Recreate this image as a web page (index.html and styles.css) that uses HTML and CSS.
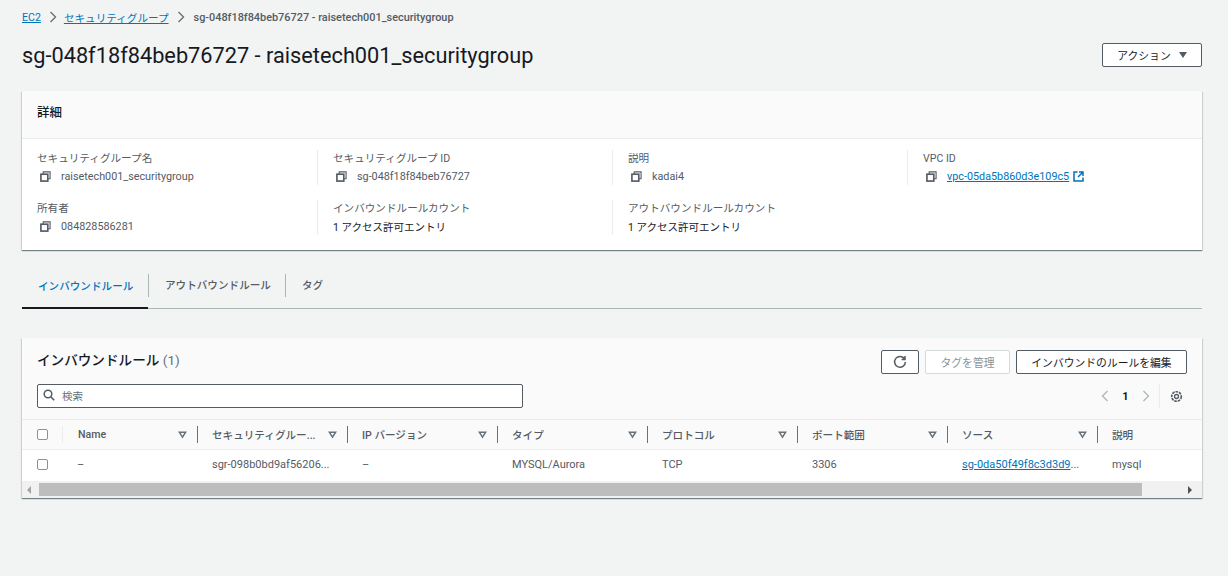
FILE: index.html
```html
<!DOCTYPE html>
<html lang="ja">
<head>
  <meta charset="UTF-8">
  <meta name="viewport" content="width=device-width, initial-scale=1.0">
  <title>Security group</title>
  <link rel="stylesheet" href="styles.css">
</head>
<body>
  <svg class="defs" width="0" height="0">
    <symbol id="copy" viewBox="0 0 12 12">
      <path d="M3.5 3.5V1h7.5v7.5H8.5" fill="none" stroke="#545b64" stroke-width="1.2"/>
      <rect x="1" y="3.5" width="7.5" height="7.5" fill="none" stroke="#545b64" stroke-width="1.8"/>
    </symbol>
    <symbol id="caret" viewBox="0 0 10 10">
      <path d="M1.5 2.5h7L5 8z" fill="none" stroke="#687078" stroke-width="1.6"/>
    </symbol>
  </svg>

  <nav class="crumbs">
    <a href="#">EC2</a>
    <svg class="crumb-sep" width="8" height="12" viewBox="0 0 8 12"><path d="M1.5 1l5 5-5 5" fill="none" stroke="#687078" stroke-width="1.4"/></svg>
    <a href="#">セキュリティグループ</a>
    <svg class="crumb-sep" width="8" height="12" viewBox="0 0 8 12"><path d="M1.5 1l5 5-5 5" fill="none" stroke="#687078" stroke-width="1.4"/></svg>
    <span class="crumb-here">sg-048f18f84beb76727 - raisetech001_securitygroup</span>
  </nav>

  <header class="page-head">
    <h1>sg-048f18f84beb76727 - raisetech001_securitygroup</h1>
    <button class="btn action-btn">アクション <span class="tri"></span></button>
  </header>

  <section class="card">
    <div class="card-head"><h2>詳細</h2></div>
    <div class="details">
      <div class="detail">
        <div class="label">セキュリティグループ名</div>
        <div class="value"><svg class="copy"><use href="#copy"/></svg>raisetech001_securitygroup</div>
      </div>
      <div class="detail">
        <div class="label">セキュリティグループ ID</div>
        <div class="value"><svg class="copy"><use href="#copy"/></svg>sg-048f18f84beb76727</div>
      </div>
      <div class="detail">
        <div class="label">説明</div>
        <div class="value"><svg class="copy"><use href="#copy"/></svg>kadai4</div>
      </div>
      <div class="detail">
        <div class="label">VPC ID</div>
        <div class="value"><svg class="copy"><use href="#copy"/></svg><a href="#">vpc-05da5b860d3e109c5</a>
          <svg class="ext" width="11" height="11" viewBox="0 0 11 11"><path d="M4.5 1H1v9h9V6.5M6 1h4v4M10 1L5 6" fill="none" stroke="#0073bb" stroke-width="1.5"/></svg>
        </div>
      </div>
      <div class="detail">
        <div class="label">所有者</div>
        <div class="value"><svg class="copy"><use href="#copy"/></svg>084828586281</div>
      </div>
      <div class="detail">
        <div class="label">インバウンドルールカウント</div>
        <div class="value dark">1 アクセス許可エントリ</div>
      </div>
      <div class="detail">
        <div class="label">アウトバウンドルールカウント</div>
        <div class="value dark">1 アクセス許可エントリ</div>
      </div>
    </div>
  </section>

  <div class="tabs">
    <div class="tab active">インバウンドルール</div>
    <div class="tab">アウトバウンドルール</div>
    <div class="tab">タグ</div>
  </div>

  <section class="card rules">
    <div class="rules-head">
      <h2>インバウンドルール <span class="count">(1)</span></h2>
      <div class="rules-actions">
        <button class="btn icon-btn">
          <svg width="14" height="14" viewBox="0 0 14 14"><path d="M11.6 4A5.4 5.4 0 1 0 12.4 7M12 1v3.4H8.6" fill="none" stroke="#545b64" stroke-width="1.5"/></svg>
        </button>
        <button class="btn disabled">タグを管理</button>
        <button class="btn edit-btn">インバウンドのルールを編集</button>
      </div>
    </div>
    <div class="tools">
      <div class="search">
        <svg width="12" height="12" viewBox="0 0 12 12"><circle cx="5" cy="5" r="3.8" fill="none" stroke="#545b64" stroke-width="1.5"/><path d="M8 8l3.2 3.2" stroke="#545b64" stroke-width="1.6"/></svg>
        <span>検索</span>
      </div>
      <div class="pager">
        <svg width="8" height="12" viewBox="0 0 8 12"><path d="M6.5 1l-5 5 5 5" fill="none" stroke="#aab7b8" stroke-width="1.3"/></svg>
        <span class="page-num">1</span>
        <svg width="8" height="12" viewBox="0 0 8 12"><path d="M1.5 1l5 5-5 5" fill="none" stroke="#aab7b8" stroke-width="1.3"/></svg>
        <span class="pager-sep"></span>
        <svg width="13" height="13" viewBox="0 0 13 13"><circle cx="6.5" cy="6.5" r="2" fill="none" stroke="#545b64" stroke-width="1.3"/><circle cx="6.5" cy="6.5" r="4.8" fill="none" stroke="#545b64" stroke-width="1.6" stroke-dasharray="2.6 .9"/></svg>
      </div>
    </div>

    <div class="grid head-row">
      <div class="check-cell"><span class="check"></span></div>
      <div class="th first">Name<svg class="caret"><use href="#caret"/></svg></div>
      <div class="th">セキュリティグルー...<svg class="caret"><use href="#caret"/></svg></div>
      <div class="th">IP バージョン<svg class="caret"><use href="#caret"/></svg></div>
      <div class="th">タイプ<svg class="caret"><use href="#caret"/></svg></div>
      <div class="th">プロトコル<svg class="caret"><use href="#caret"/></svg></div>
      <div class="th">ポート範囲<svg class="caret"><use href="#caret"/></svg></div>
      <div class="th">ソース<svg class="caret"><use href="#caret"/></svg></div>
      <div class="th last">説明</div>
    </div>
    <div class="grid body-row">
      <div class="check-cell"><span class="check"></span></div>
      <div class="td first">–</div>
      <div class="td">sgr-098b0bd9af56206...</div>
      <div class="td">–</div>
      <div class="td">MYSQL/Aurora</div>
      <div class="td">TCP</div>
      <div class="td">3306</div>
      <div class="td"><a href="#">sg-0da50f49f8c3d3d9</a>...</div>
      <div class="td last">mysql</div>
    </div>
    <div class="scrollbar">
      <span class="arrow left"></span>
      <span class="thumb"></span>
      <span class="arrow right"></span>
    </div>
  </section>
</body>
</html>
```
FILE: styles.css
```css
* {
  box-sizing: border-box;
}

body {
  margin: 0;
  height: 576px;
  overflow: hidden;
  padding: 0 26px 0 22px;
  background: #f2f3f3;
  color: #16191f;
  font-family: Roboto, "Noto Sans CJK JP", sans-serif;
  font-size: 11px;
}

.defs {
  position: absolute;
}

a {
  color: #0073bb;
}

h1, h2 {
  margin: 0;
  font-weight: 400;
}

.crumbs {
  display: flex;
  align-items: center;
  height: 34px;
  font-size: 10.6px;
  color: #545b64;
}

.crumb-sep {
  margin: 0 7px 0 8px;
}

.crumb-here {
  margin-left: 2px;
  font-size: 10.9px;
  font-weight: 500;
}

.page-head {
  display: flex;
  justify-content: space-between;
  align-items: center;
  height: 42px;
}

h1 {
  font-size: 21.75px;
}

.btn {
  height: 24px;
  padding: 0 14px;
  background: #fff;
  border: 1px solid #545b64;
  border-radius: 2px;
  color: #16191f;
  font: inherit;
  font-size: 10.8px;
  white-space: nowrap;
  display: inline-flex;
  align-items: center;
  justify-content: center;
}

.action-btn {
  width: 100px;
  gap: 8px;
}

.tri {
  width: 0;
  height: 0;
  border-left: 4px solid transparent;
  border-right: 4px solid transparent;
  border-top: 6px solid #545b64;
}

.card {
  background: #fff;
  box-shadow: 0 1px 1px 0 rgba(0, 28, 36, 0.4), 1px 1px 1px 0 rgba(0, 28, 36, 0.1), -1px 1px 1px 0 rgba(0, 28, 36, 0.1);
}

.card-head {
  display: flex;
  align-items: center;
  height: 48px;
  margin-top: 15px;
  padding: 0 0 6px 15px;
  background: #fafafa;
  border-bottom: 1px solid #eaeded;
}

.card-head h2 {
  font-size: 12.5px;
  font-weight: 500;
}

.details {
  display: grid;
  grid-template-columns: 280px 295px 295px 1fr;
  grid-auto-rows: 50px;
  padding: 11px 0 9px 15px;
  height: 111px;
}

.detail {
  padding-left: 15px;
  height: 35px;
  border-left: 1px solid #eaeded;
}

.detail:nth-child(4n + 1) {
  padding-left: 0;
  border-left: 0;
}

.label {
  height: 17px;
  line-height: 17px;
  font-size: 10.6px;
  color: #545b64;
}

.value {
  display: flex;
  align-items: center;
  height: 19px;
  font-size: 10.8px;
  color: #545b64;
}

.value.dark {
  color: #16191f;
  font-size: 10.5px;
}

.copy {
  width: 11px;
  height: 11px;
  margin: 0 10px 0 3px;
  flex-shrink: 0;
}

.ext {
  margin-left: 4px;
}

.tabs {
  display: flex;
  height: 45px;
  margin-top: 14px;
  border-bottom: 1px solid #aab7b8;
  font-size: 10.6px;
  font-weight: 500;
  color: #545b64;
}

.tab {
  position: relative;
  display: flex;
  align-items: center;
  white-space: nowrap;
  padding: 0 14px 3px 17px;
}

.tab + .tab::before {
  content: "";
  position: absolute;
  left: 0;
  top: 10px;
  height: 23px;
  border-left: 1px solid #aab7b8;
}

.tab.active {
  color: #0073bb;
  width: 126px;
  padding-left: 16px;
  box-shadow: inset 0 -2px 0 #16191f;
  margin-bottom: -1px;
}

.rules {
  margin-top: 29px;
  height: 160px;
}

.rules-head {
  display: flex;
  justify-content: space-between;
  padding: 12px 15px 0;
  height: 46px;
  background: #fafafa;
}

.rules-head h2 {
  font-size: 13.6px;
  font-weight: 500;
  line-height: 20px;
}

.count {
  color: #687078;
  font-weight: 400;
}

.rules-actions {
  display: flex;
  gap: 6px;
}

.icon-btn {
  width: 38px;
  padding: 0;
}

.btn.disabled {
  width: 85px;
  padding: 0;
  border-color: #d5dbdb;
  color: #879596;
}

.edit-btn {
  width: 171px;
  padding: 0;
}

.tools {
  display: flex;
  justify-content: space-between;
  height: 36px;
  padding: 0 15px;
  background: #fafafa;
  border-bottom: 1px solid #eaeded;
}

.search {
  display: flex;
  align-items: center;
  gap: 7px;
  width: 486px;
  height: 24px;
  padding: 0 0 2px 5px;
  background: #fff;
  border: 1px solid #545b64;
  border-radius: 2px;
  font-size: 10.5px;
  color: #687078;
}

.pager {
  display: flex;
  align-items: center;
  height: 24px;
  padding-right: 4px;
}

.page-num {
  width: 33px;
  text-align: center;
  font-weight: 700;
  color: #16191f;
}

.pager-sep {
  height: 24px;
  margin: 0 10px 0 9px;
  border-left: 1px solid #eaeded;
}

.grid {
  display: grid;
  grid-template-columns: 40px 135px repeat(6, 150px) 1fr;
  background: #fff;
}

.head-row {
  height: 30px;
  background: #fafafa;
  border-bottom: 1px solid #eaeded;
  font-size: 10.6px;
  color: #545b64;
  font-weight: 500;
}

.body-row {
  height: 31px;
  padding-bottom: 2px;
  color: #545b64;
}

.check-cell {
  display: flex;
  align-items: center;
  padding-left: 15px;
}

.check {
  width: 11px;
  height: 11px;
  background: #fff;
  border: 1px solid #879596;
  border-radius: 2px;
}

.th, .td {
  display: flex;
  align-items: center;
  white-space: nowrap;
  overflow: hidden;
  padding: 0 14px;
}

.th {
  margin: 6px 0;
  justify-content: space-between;
  border-left: 1px solid #687078;
  padding: 0 10px 1px 14px;
}

.th.first {
  border-left-color: #eaeded;
}

.td {
  padding-left: 15px;
}

.th.first, .td.first {
  padding-left: 15px;
}

.caret {
  width: 9px;
  height: 9px;
  flex-shrink: 0;
}

.scrollbar {
  display: flex;
  align-items: center;
  height: 17px;
  background: #f1f1f1;
}

.arrow {
  width: 0;
  height: 0;
  border-top: 4px solid transparent;
  border-bottom: 4px solid transparent;
}

.arrow.left {
  margin: 0 8px 0 5px;
  border-right: 4px solid #a3a3a3;
}

.arrow.right {
  margin-left: 46px;
  border-left: 4px solid #505050;
}

.thumb {
  width: 1103px;
  height: 13px;
  background: #bdbdbd;
}
```
